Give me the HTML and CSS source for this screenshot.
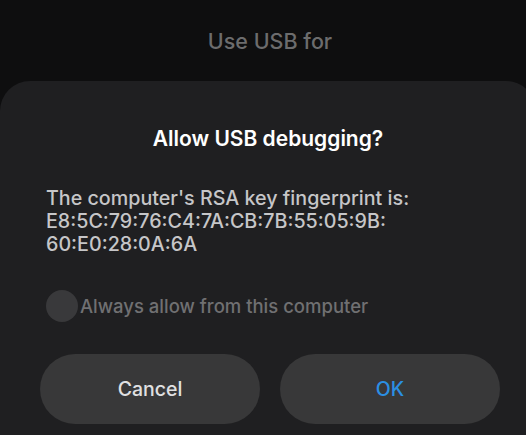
FILE: index.html
```html
<!DOCTYPE html>
<html>
<head>
<meta charset="utf-8">
<link rel="stylesheet" href="styles.css">
</head>
<body>
<div class="screen">
  <div class="behind">
    <div class="behind-title">Use USB for</div>
  </div>
  <div class="dialog">
    <h1 class="title">Allow USB debugging?</h1>
    <p class="message">The computer's RSA key fingerprint is:<br>E8:5C:79:76:C4:7A:CB:7B:55:05:9B:<br>60:E0:28:0A:6A</p>
    <label class="check">
      <span class="circle"></span>
      <span class="check-label">Always allow from this computer</span>
    </label>
    <div class="buttons">
      <button class="btn btn-cancel">Cancel</button>
      <button class="btn btn-ok">OK</button>
    </div>
  </div>
</div>
</body>
</html>
```

FILE: styles.css
```css
* { box-sizing: border-box; }
html, body {
  margin: 0;
  padding: 0;
  background: #0e0e0f;
  width: 526px;
  height: 435px;
  overflow: hidden;
  font-family: Inter, Roboto, "Liberation Sans", sans-serif;
}
.screen {
  display: flex;
  flex-direction: column;
  height: 435px;
}
.behind {
  height: 81px;
  display: flex;
  justify-content: center;
  padding-top: 27px;
  padding-left: 14px;
}
.behind-title {
  color: #6c6c6d;
  font-size: 21.5px;
  font-weight: 500;
  line-height: 28px;
}
.dialog {
  flex: 1;
  background: #1f1f21;
  border-radius: 30px 30px 0 0;
  margin-right: -10px;
  padding: 45px 36px 0 46px;
  display: flex;
  flex-direction: column;
}
.title {
  margin: 0 10px 0 0;
  text-align: center;
  color: #ffffff;
  font-size: 21px;
  font-weight: 600;
  line-height: 26px;
}
.message {
  margin: 35px 0 0 0;
  color: #c6c6c8;
  font-size: 19.7px;
  font-weight: 500;
  line-height: 23px;
}
.check {
  margin-top: 34px;
  display: flex;
  align-items: center;
  height: 32px;
}
.circle {
  width: 32px;
  height: 32px;
  border-radius: 50%;
  background: #39393b;
  flex: none;
}
.check-label {
  margin-left: 2px;
  color: #707072;
  font-size: 18.5px;
  font-weight: 500;
}
.buttons {
  margin: 32px 0 0 -6px;
  width: 460px;
  display: flex;
  gap: 20px;
}
.btn {
  flex: 1;
  height: 70px;
  border: none;
  border-radius: 35px;
  background: #383839;
  font-family: inherit;
  font-size: 19.5px;
  font-weight: 500;
}
.btn-cancel { color: #e0e0e2; }
.btn-ok { color: #2b8fe3; }
```
